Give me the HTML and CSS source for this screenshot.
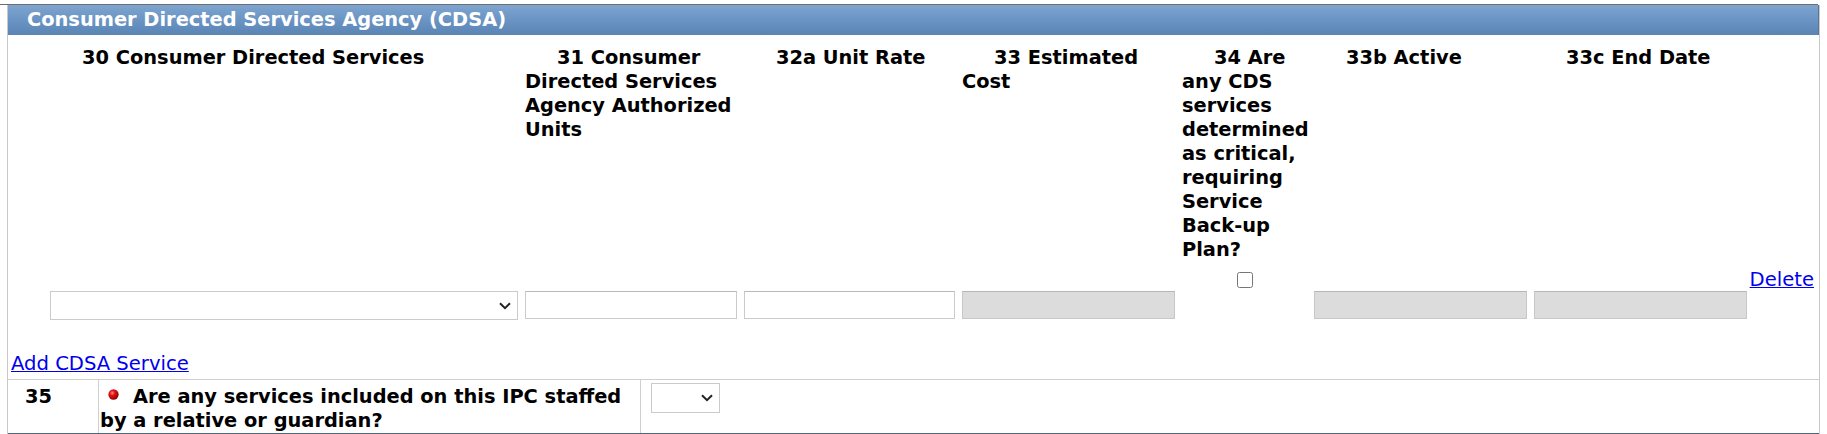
FILE: index.html
```html
<!DOCTYPE html>
<html lang="en">
<head>
<meta charset="utf-8">
<title>CDSA</title>
<link rel="stylesheet" href="styles.css">
</head>
<body>
<div class="topline"></div>
<section class="panel">
  <h2 class="panel-title">Consumer Directed Services Agency (CDSA)</h2>
  <div class="grid">
    <div class="th">30 Consumer Directed Services</div>
    <div class="th">31 Consumer Directed Services Agency Authorized Units</div>
    <div class="th">32a Unit Rate</div>
    <div class="th">33 Estimated Cost</div>
    <div class="th">34 Are any CDS services determined as critical, requiring Service Back-up Plan?</div>
    <div class="th">33b Active</div>
    <div class="th">33c End Date</div>
    <div class="th"></div>

    <div class="td td-input">
      <div class="select-wrap">
        <select class="select"><option></option></select>
        <svg class="chev" viewBox="0 0 12 8" width="12" height="8"><path d="M1 1.2 L6 6.2 L11 1.2" fill="none" stroke="#222" stroke-width="2"/></svg>
      </div>
    </div>
    <div class="td td-input"><input class="text" type="text"></div>
    <div class="td td-input"><input class="text" type="text"></div>
    <div class="td td-input"><input class="text disabled" type="text" disabled></div>
    <div class="td td-check"><input class="check" type="checkbox"></div>
    <div class="td td-input"><input class="text disabled" type="text" disabled></div>
    <div class="td td-input"><input class="text disabled" type="text" disabled></div>
    <div class="td td-link"><a href="#" class="link">Delete</a></div>
  </div>
  <div class="add"><a href="#" class="link">Add CDSA Service</a></div>
  <div class="qrow">
    <div class="qnum">35</div>
    <div class="qtext"><svg class="bullet" viewBox="0 0 12 12" width="11" height="11"><defs><radialGradient id="rg" cx="0.38" cy="0.35" r="0.7"><stop offset="0" stop-color="#ff8a8a"/><stop offset="0.35" stop-color="#e41414"/><stop offset="1" stop-color="#8c0000"/></radialGradient></defs><circle cx="6" cy="6" r="5.6" fill="url(#rg)"/></svg>Are any services included on this IPC staffed by a relative or guardian?</div>
    <div class="qans">
      <div class="select-wrap small">
        <select class="select"><option></option></select>
        <svg class="chev" viewBox="0 0 12 8" width="12" height="8"><path d="M1 1.2 L6 6.2 L11 1.2" fill="none" stroke="#222" stroke-width="2"/></svg>
      </div>
    </div>
  </div>
</section>
</body>
</html>
```

FILE: styles.css
```css
* { box-sizing: border-box; }

html, body {
  margin: 0;
  padding: 0;
  background: #ffffff;
}

body {
  font-family: "DejaVu Sans", Verdana, sans-serif;
  color: #000;
  width: 1827px;
}

.topline {
  margin-top: 4px;
  height: 1px;
  width: 1818px;
  background: #6e6e6e;
}

.panel {
  margin-left: 7px;
  width: 1813px;
  border-left: 1px solid #c9c9c9;
  border-right: 1px solid #c9c9c9;
}

.panel-title {
  margin: 0;
  height: 30px;
  line-height: 30px;
  padding-left: 19px;
  font-size: 19.4px;
  font-weight: bold;
  color: #ffffff;
  background: linear-gradient(#7fa5d0, #6a94c3 50%, #5a84b4);
  border-right: 1px solid #5a7698;
}

.grid {
  display: grid;
  grid-template-columns: 468px 212px 211px 213px 125px 213px 213px 63px;
  column-gap: 7px;
  padding: 11px 0 0 42px;
  align-items: start;
}

.th {
  font-size: 19.4px;
  font-weight: bold;
  line-height: 24px;
  text-indent: 32px;
}

.td-input {
  padding-top: 29px;
}

.td-check {
  padding-top: 10px;
  text-align: center;
  line-height: 0;
}

.td-link {
  justify-self: end;
  margin-right: 3px;
  padding-top: 6px;
  line-height: 24px;
  white-space: nowrap;
}

.link {
  color: #0000ee;
  text-decoration: underline;
  font-size: 19.6px;
}

.text {
  display: block;
  width: 100%;
  height: 28px;
  margin: 0;
  border: 1px solid #cbcbcb;
  border-top-color: #b9b9b9;
  background: #ffffff;
  font: inherit;
  padding: 0 4px;
}

.text.disabled {
  background: #dcdcdc;
  border-color: #c7c7c7;
  border-top-color: #b6b6b6;
}

.check {
  width: 16px;
  height: 16px;
  margin: 0;
}

.select-wrap {
  position: relative;
  width: 100%;
  height: 29px;
}

.select-wrap.small {
  width: 69px;
  height: 30px;
}

.select {
  -webkit-appearance: none;
  appearance: none;
  display: block;
  width: 100%;
  height: 100%;
  margin: 0;
  border: 1px solid #cbcbcb;
  border-radius: 0;
  background: #ffffff;
  font: inherit;
  font-size: 16px;
}

.chev {
  position: absolute;
  right: 7px;
  top: 11px;
  pointer-events: none;
}

.add {
  margin-top: 32px;
  margin-bottom: 2px;
  padding-left: 3px;
  line-height: 24px;
}

.qrow {
  display: grid;
  grid-template-columns: 91px 542px 1fr;
  border-top: 1px solid #cfcfcf;
  border-bottom: 2px solid #52657b;
}

.qnum,
.qtext {
  font-size: 19.4px;
  font-weight: bold;
  line-height: 24px;
  padding-top: 5px;
  border-right: 1px solid #cfcfcf;
}

.qnum {
  padding-left: 17px;
}

.qtext {
  padding-left: 1px;
  padding-right: 2px;
}

.bullet {
  display: inline-block;
  vertical-align: 3px;
  margin: 0 14px 0 8px;
}

.qans {
  padding: 3px 0 0 10px;
}
```
